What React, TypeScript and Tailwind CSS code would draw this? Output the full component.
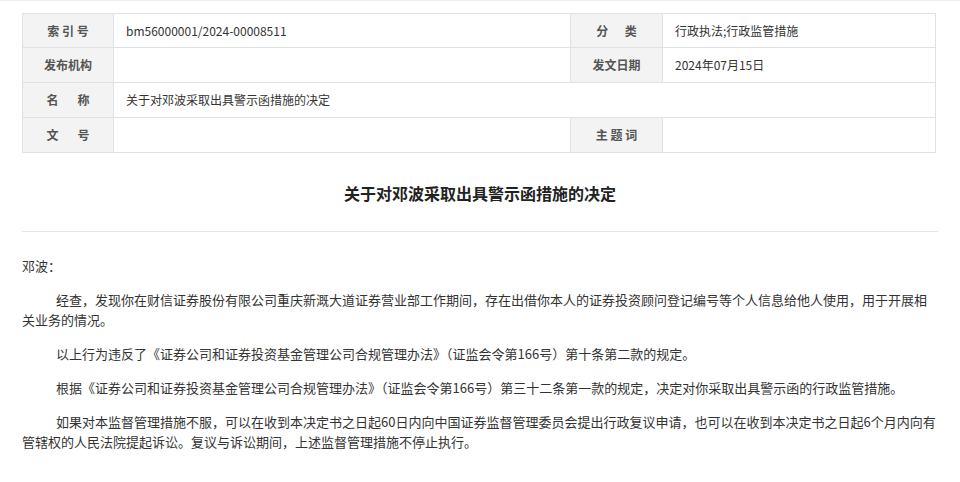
export default function App() {
  const f = { fontFamily: '"Noto Sans CJK SC", "Liberation Sans", sans-serif' };
  const lab = "bg-[#f3f3f3] text-[#555] font-bold text-[12px] text-center border border-[#dde2e8]";
  const val = "text-[#333] text-[12px] px-[12px] border border-[#dde2e8]";
  return (
    <div style={f} className="w-[960px] h-[482px] bg-white border-t border-[#eee] overflow-hidden">
      <div className="px-[22px] pt-[12px]">
        <table className="w-[914px] border-collapse table-fixed">
          <colgroup>
            <col className="w-[91px]" /><col className="w-[457px]" /><col className="w-[92px]" /><col />
          </colgroup>
          <tbody>
            <tr className="h-[34px]">
              <td className={lab}>索 引 号</td>
              <td className={val}>bm56000001/2024-00008511</td>
              <td className={lab}>分&nbsp;&nbsp;&nbsp;&nbsp;&nbsp;&nbsp;类</td>
              <td className={val}>行政执法;行政监管措施</td>
            </tr>
            <tr className="h-[35px]">
              <td className={lab}>发布机构</td>
              <td className={val}></td>
              <td className={lab}>发文日期</td>
              <td className={val}>2024年07月15日</td>
            </tr>
            <tr className="h-[35px]">
              <td className={lab}>名&nbsp;&nbsp;&nbsp;&nbsp;&nbsp;&nbsp;&nbsp;称</td>
              <td className={val} colSpan={3}>关于对邓波采取出具警示函措施的决定</td>
            </tr>
            <tr className="h-[35px]">
              <td className={lab}>文&nbsp;&nbsp;&nbsp;&nbsp;&nbsp;&nbsp;&nbsp;号</td>
              <td className={val}></td>
              <td className={lab}>主 题 词</td>
              <td className={val}></td>
            </tr>
          </tbody>
        </table>
        <div className="text-center font-bold text-[16px] text-[#222] mt-[28px] leading-[24px]">关于对邓波采取出具警示函措施的决定</div>
        <div className="border-t border-[#e5e5e5] mt-[26px]" />
        <div className="text-[13px] text-[#333] leading-[20px] pt-[24px]">
          <p>邓波：</p>
          <p className="indent-[34px] mt-[14px]">经查，发现你在财信证券股份有限公司重庆新溉大道证券营业部工作期间，存在出借你本人的证券投资顾问登记编号等个人信息给他人使用，用于开展相关业务的情况。</p>
          <p className="indent-[34px] mt-[14px]">以上行为违反了《证券公司和证券投资基金管理公司合规管理办法》（证监会令第166号）第十条第二款的规定。</p>
          <p className="indent-[34px] mt-[14px]">根据《证券公司和证券投资基金管理公司合规管理办法》（证监会令第166号）第三十二条第一款的规定，决定对你采取出具警示函的行政监管措施。</p>
          <p className="indent-[34px] mt-[14px]">如果对本监督管理措施不服，可以在收到本决定书之日起60日内向中国证券监督管理委员会提出行政复议申请，也可以在收到本决定书之日起6个月内向有管辖权的人民法院提起诉讼。复议与诉讼期间，上述监督管理措施不停止执行。</p>
        </div>
      </div>
    </div>
  );
}
